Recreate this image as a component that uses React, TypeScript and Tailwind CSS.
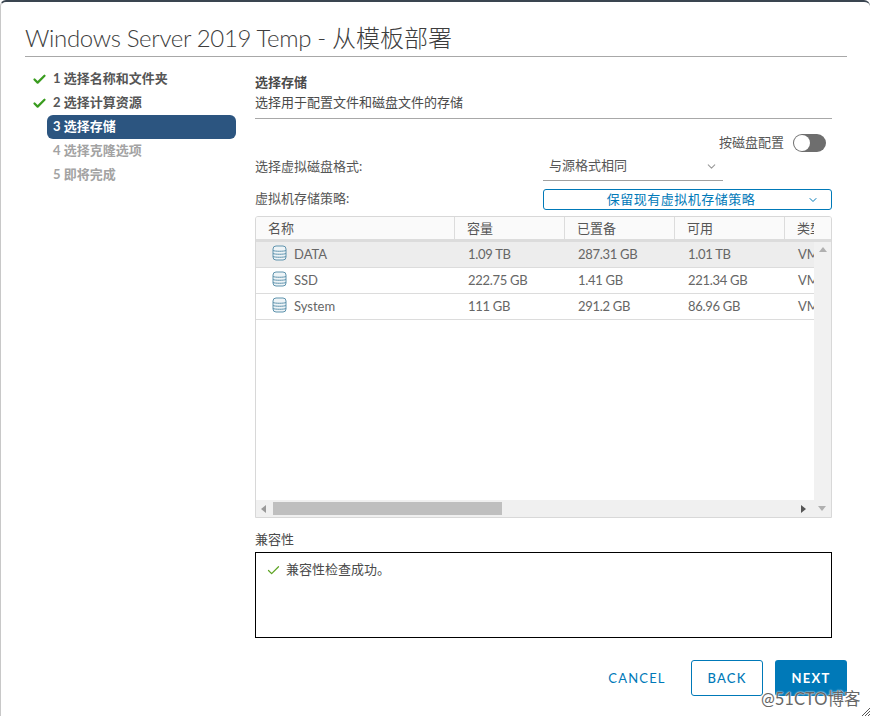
import { Check, ChevronDown } from 'lucide-react'

const font = '[font-family:Lato,"Noto_Sans_CJK_SC",sans-serif]'

const steps = [
  { label: '1 选择名称和文件夹', state: 'done' },
  { label: '2 选择计算资源', state: 'done' },
  { label: '3 选择存储', state: 'active' },
  { label: '4 选择克隆选项', state: 'todo' },
  { label: '5 即将完成', state: 'todo' },
]

const rows = [
  { name: 'DATA', capacity: '1.09 TB', provisioned: '287.31 GB', free: '1.01 TB' },
  { name: 'SSD', capacity: '222.75 GB', provisioned: '1.41 GB', free: '221.34 GB' },
  { name: 'System', capacity: '111 GB', provisioned: '291.2 GB', free: '86.96 GB' },
]

function DatastoreIcon() {
  return (
    <svg width="15" height="16" viewBox="0 0 15 16" fill="none" stroke="#5f93ad" strokeWidth="1">
      <rect x="1" y="1" width="13" height="14" rx="3" fill="#eef4f7" />
      <path d="M1 5.5c2 1 11 1 13 0M1 8.5c2 1 11 1 13 0M1 11.5c2 1 11 1 13 0" />
    </svg>
  )
}

function Arrow({ dir }: { dir: 'up' | 'down' | 'left' | 'right' }) {
  const points = {
    up: '0,5 8,5 4,0',
    down: '0,0 8,0 4,5',
    left: '5,0 5,8 0,4',
    right: '0,0 0,8 5,4',
  }[dir]
  const fill = dir === 'right' ? '#555555' : dir === 'left' ? '#999999' : '#b0b0b0'
  return (
    <svg width="8" height="8" viewBox="0 0 8 8">
      <polygon points={points} fill={fill} />
    </svg>
  )
}

export default function App() {
  return (
    <div className={`${font} relative h-[716px] w-[870px] overflow-hidden rounded-t-md border-t-2 border-l border-t-[#3a4550] border-l-[#c8c8c8] bg-white text-[#565656]`}>
      <div className="mr-[23px] ml-6 flex h-[55px] items-end border-b border-[#a8a8a8]">
        <h1 className="text-[24px] leading-[36px] font-light tracking-[-0.34px] text-[#3d3d3d]">
          Windows Server 2019 Temp - <span className="tracking-normal">从模板部署</span>
        </h1>
      </div>

      <div className="flex">
        <nav className="mt-[10px] ml-[31px] w-[204px] shrink-0 text-[13px] font-bold">
          {steps.map(s => (
            <div key={s.label} className="relative flex h-6 items-center pl-[15px]">
              {s.state === 'done' && (
                <Check size={15} strokeWidth={3.6} className="absolute left-0 text-[#3a9c1f]" />
              )}
              <div
                className={
                  s.state === 'active'
                    ? 'flex h-6 flex-1 items-center rounded-md bg-[#2c5580] pl-[6px] text-white'
                    : s.state === 'done'
                      ? 'pl-[6px] text-[#565656]'
                      : 'pl-[6px] text-[#a3a3a3]'
                }
              >
                {s.label}
              </div>
            </div>
          ))}
        </nav>

        <main className="mt-[15px] ml-[19px] w-[577px] text-[13px]">
          <div className="h-[47px] border-b border-[#a8a8a8]">
            <p className="h-5 leading-5 font-bold text-[#4a4a4a]">选择存储</p>
            <p className="h-5 leading-5 text-[#4a4a4a]">选择用于配置文件和磁盘文件的存储</p>
          </div>

          <div className="mt-[15px] flex h-[18px] items-center justify-end pr-[6px]">
            <span className="mr-[9px]">按磁盘配置</span>
            <div className="flex h-[18px] w-[33px] items-center rounded-full bg-[#6e6e6e] pl-[1px]">
              <div className="h-4 w-4 rounded-full bg-white" />
            </div>
          </div>

          <div className="mt-[4px] flex h-[23px] items-center">
            <span className="w-[288px] pb-[2px]">选择虚拟磁盘格式:</span>
            <div className="flex h-[26px] w-[180px] items-center justify-between border-b border-[#a0a0a0] pr-[5px] pb-[2px] pl-[6px]">
              <span>与源格式相同</span>
              <ChevronDown size={13} className="text-[#9a9a9a]" />
            </div>
          </div>

          <div className="mt-[10px] flex h-[21px] items-center">
            <span className="w-[288px] pb-[2px]">虚拟机存储策略:</span>
            <div className="relative flex h-[21px] w-[289px] items-center justify-center rounded-[3px] border border-[#0079b8] pr-[13px] tracking-[0.5px] text-[#0079b8]">
              保留现有虚拟机存储策略
              <ChevronDown size={12} className="absolute right-[12px] text-[#0079b8]" />
            </div>
          </div>

          <div className="mt-[6px] flex h-[302px] flex-col overflow-hidden rounded-t-[3px] border border-[#d8d8d8]">
            <div className="flex h-[25px] shrink-0 border-b-[3px] border-[#dcdcdc] bg-[#fafafa] text-[#565656]">
              <div className="w-[199px] border-r border-[#dcdcdc] pl-3 leading-[22px]">名称</div>
              <div className="w-[110px] border-r border-[#dcdcdc] pl-3 leading-[22px]">容量</div>
              <div className="w-[110px] border-r border-[#dcdcdc] pl-3 leading-[22px]">已置备</div>
              <div className="w-[110px] border-r border-[#dcdcdc] pl-3 leading-[22px]">可用</div>
              <div className="w-[29px] overflow-hidden pl-3 leading-[22px] whitespace-nowrap">类型</div>
            </div>

            <div className="flex min-h-0 flex-1">
              <div className="min-w-0 flex-1 overflow-hidden text-[#666666]">
                {rows.map((r, i) => (
                  <div
                    key={r.name}
                    className={`flex h-[26px] items-center border-b border-[#dcdcdc] pt-[1px] ${i === 0 ? 'bg-[#ededed]' : 'bg-white'}`}
                  >
                    <div className="flex w-[199px] shrink-0 items-center pl-[16px]">
                      <span className="mr-[7px] -mt-[4px]">
                        <DatastoreIcon />
                      </span>
                      {r.name}
                    </div>
                    <div className="w-[110px] shrink-0 pl-[13px] tracking-[-0.3px]">{r.capacity}</div>
                    <div className="w-[110px] shrink-0 pl-[13px] tracking-[-0.3px]">{r.provisioned}</div>
                    <div className="w-[110px] shrink-0 pl-[13px] tracking-[-0.3px]">{r.free}</div>
                    <div className="shrink-0 pl-[13px]">VM</div>
                  </div>
                ))}
              </div>
              <div className="flex w-[17px] shrink-0 justify-center bg-[#f1f1f1] pt-[5px]">
                <Arrow dir="up" />
              </div>
            </div>

            <div className="flex h-[17px] shrink-0 items-center bg-[#f0f0f0]">
              <div className="flex w-[17px] justify-center">
                <Arrow dir="left" />
              </div>
              <div className="h-[13px] w-[229px] bg-[#bfbfbf]" />
              <div className="flex-1" />
              <div className="flex w-[16px] justify-center">
                <Arrow dir="right" />
              </div>
              <div className="flex w-[18px] justify-center pt-[3px]">
                <Arrow dir="down" />
              </div>
            </div>
          </div>

          <p className="mt-[11px] h-5 leading-5 text-[#4a4a4a]">兼容性</p>
          <div className="mt-[3px] flex h-[86px] items-start border border-black pt-[7px] pl-[10px] text-[#4a4a4a]">
            <Check size={15} strokeWidth={2} className="mt-[3px] mr-[5px] text-[#5ea424]" />
            兼容性检查成功。
          </div>

          <div className="mt-[22px] -mr-[15px] flex justify-end text-[13px] tracking-[1.2px]">
            <button className="mr-[12px] h-9 w-[92px] pt-[1px] pl-[8px] text-[#0079b8]">CANCEL</button>
            <button className="mr-[12px] h-9 w-[72px] rounded-[3px] border border-[#0079b8] pt-[1px] font-medium text-[#0079b8]">BACK</button>
            <button className="h-9 w-[72px] rounded-[3px] bg-[#0079b8] pt-[1px] font-bold text-white">NEXT</button>
          </div>
        </main>
      </div>

      <span className="absolute top-[685px] left-[760px] text-[16.5px] text-[#666666] [text-shadow:0_0_1px_#ffffff,0_0_2px_#ffffff]">
        @51CTO博客
      </span>
      <svg className="absolute right-0 bottom-0" width="8" height="8" viewBox="0 0 8 8" stroke="#555555" strokeWidth="1">
        <path d="M0 8 8 0M3 8l5-5M6 8l2-2" />
      </svg>
    </div>
  )
}
